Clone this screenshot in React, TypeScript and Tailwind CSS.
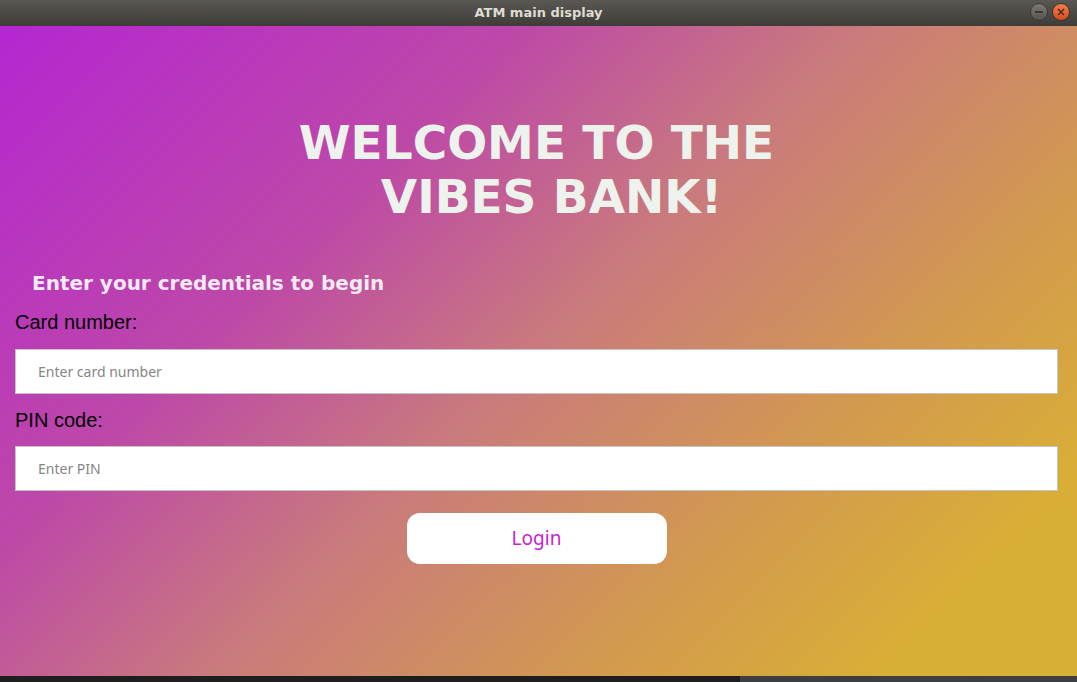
import { useState } from "react";

function TitleBar() {
  return (
    <div className="relative flex h-[26px] items-center justify-center bg-gradient-to-b from-[#5a5853] to-[#3d3c38]">
      <span className="font-['DejaVu_Sans',sans-serif] text-[13px] font-bold text-[#dfdbd2]">ATM main display</span>
      <div className="absolute right-[7px] top-[3px] flex gap-[4px]">
        <div className="flex h-[18px] w-[18px] items-center justify-center rounded-full bg-gradient-to-b from-[#7c7b77] to-[#55544f] border border-[#3a3935]">
          <div className="h-[2px] w-[8px] bg-[#3a3935]" />
        </div>
        <div className="flex h-[18px] w-[18px] items-center justify-center rounded-full bg-gradient-to-b from-[#f57a4c] to-[#de4a1b] border border-[#3a3935]">
          <svg width="8" height="8" viewBox="0 0 8 8">
            <path d="M1 1 L7 7 M7 1 L1 7" stroke="#3a2a20" strokeWidth="1.4" />
          </svg>
        </div>
      </div>
    </div>
  );
}

export default function App() {
  const [card, setCard] = useState("");
  const [pin, setPin] = useState("");

  return (
    <div className="flex h-[682px] w-[1077px] flex-col overflow-hidden">
      <TitleBar />
      <div className="flex h-[650px] flex-col bg-[linear-gradient(135deg,#b526d1_0%,#bd48a8_30%,#c97b7c_50%,#d39a4e_72%,#d8ae37_88%,#d8af36_100%)] pl-[15px] pr-[19px]">
        <h1 className="mt-[90px] text-center font-['DejaVu_Sans',sans-serif] text-[47px] font-bold leading-[54px] text-[#eef2ec]">
          <span className="block">WELCOME TO THE</span>
          <span className="block pl-[30px]">VIBES BANK!</span>
        </h1>
        <h2 className="ml-[17px] mt-[44px] font-['DejaVu_Sans',sans-serif] text-[20px] font-bold text-[#f1e9f1]">
          Enter your credentials to begin
        </h2>
        <label className="mt-[13px] font-['Liberation_Sans',sans-serif] text-[20px] leading-[22px] text-black">Card number:</label>
        <input
          autoFocus
          value={card}
          onChange={(e) => setCard(e.target.value)}
          placeholder="Enter card number"
          className="mt-[16px] h-[45px] w-full border border-[#c4c4c4] bg-white pl-[22px] font-['Noto_Sans',sans-serif] text-[14px] text-black caret-black outline-none placeholder:text-[#858585]"
        />
        <label className="mt-[15px] font-['Liberation_Sans',sans-serif] text-[20px] leading-[22px] text-black">PIN code:</label>
        <input
          value={pin}
          onChange={(e) => setPin(e.target.value)}
          type="password"
          placeholder="Enter PIN"
          className="mt-[15px] h-[45px] w-full border border-[#c4c4c4] bg-white pl-[22px] font-['Noto_Sans',sans-serif] text-[14px] text-black outline-none placeholder:text-[#858585]"
        />
        <div className="mt-[22px] flex justify-center">
          <button className="h-[51px] w-[260px] rounded-[13px] bg-white font-['Noto_Sans',sans-serif] text-[19px] text-[#c424d0]">
            Login
          </button>
        </div>
      </div>
      <div className="flex h-[6px]">
        <div className="w-[740px] bg-[#1e1e1e]" />
        <div className="flex-1 bg-[#3d3e40]" />
      </div>
    </div>
  );
}
